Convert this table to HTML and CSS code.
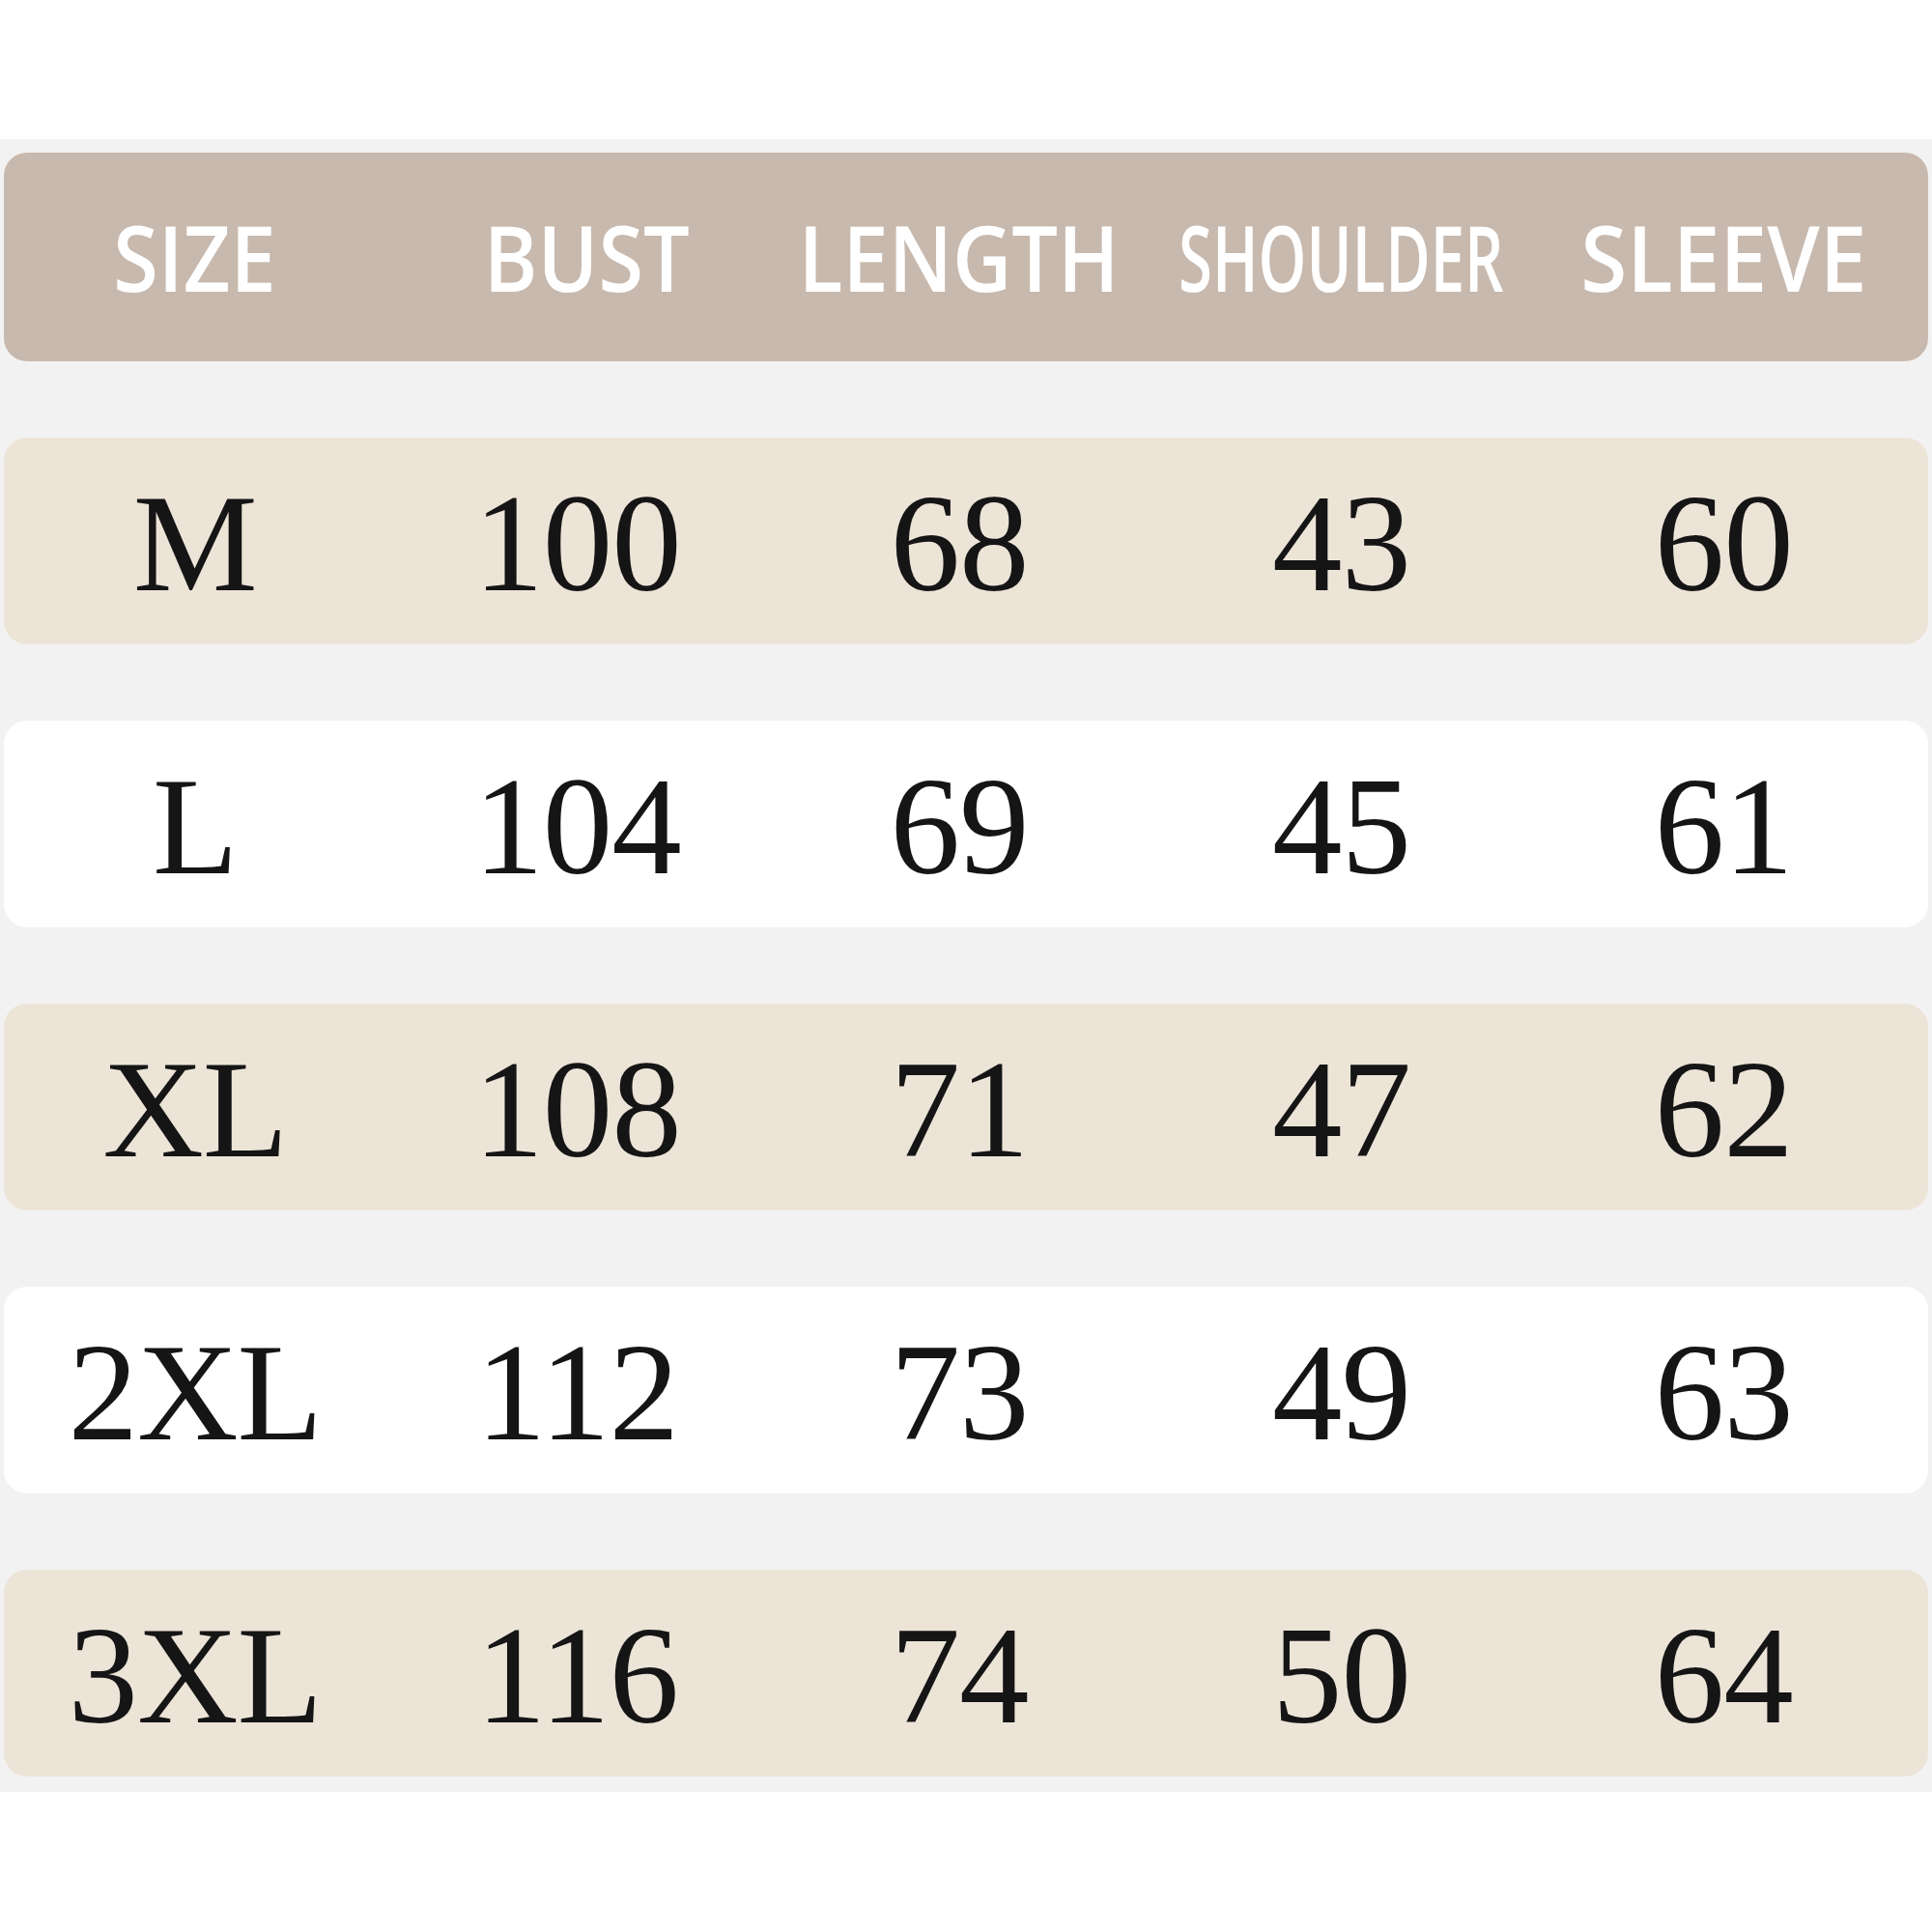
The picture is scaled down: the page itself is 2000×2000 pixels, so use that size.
FILE: index.html
```html
<!DOCTYPE html>
<html>
<head>
<meta charset="utf-8">
<link rel="stylesheet" href="styles.css">
</head>
<body>
<div class="top"></div>
<div class="chart">
  <div class="row head">
    <div class="cell"><span class="hw">SIZE</span></div>
    <div class="cell bust"><span class="hw">BUST</span></div>
    <div class="cell"><span class="hw">LENGTH</span></div>
    <div class="cell"><span class="hw narrow">SHOULDER</span></div>
    <div class="cell"><span class="hw wide">SLEEVE</span></div>
  </div>
  <div class="row beige">
    <div class="cell">M</div><div class="cell">100</div><div class="cell">68</div><div class="cell">43</div><div class="cell">60</div>
  </div>
  <div class="row white">
    <div class="cell">L</div><div class="cell">104</div><div class="cell">69</div><div class="cell">45</div><div class="cell">61</div>
  </div>
  <div class="row beige">
    <div class="cell">XL</div><div class="cell">108</div><div class="cell">71</div><div class="cell">47</div><div class="cell">62</div>
  </div>
  <div class="row white">
    <div class="cell">2XL</div><div class="cell">112</div><div class="cell">73</div><div class="cell">49</div><div class="cell">63</div>
  </div>
  <div class="row beige">
    <div class="cell">3XL</div><div class="cell">116</div><div class="cell">74</div><div class="cell">50</div><div class="cell">64</div>
  </div>
</div>
</body>
</html>
```

FILE: styles.css
```css
html, body {
  margin: 0;
  padding: 0;
  background: #ffffff;
}
.top {
  height: 144px;
}
.chart {
  background: #f2f2f2;
  padding: 14px 4px 16px 4px;
  display: flex;
  flex-direction: column;
  gap: 79px;
}
.row {
  display: grid;
  grid-template-columns: repeat(5, minmax(0, 1fr));
  padding-right: 14px;
  height: 214px;
  border-radius: 24px;
  align-items: center;
  font-family: "Liberation Serif", "Times New Roman", serif;
  font-size: 145px;
  letter-spacing: -1px;
  color: #151515;
}
.row.head {
  height: 216px;
  background: #c8b9ae;
  font-family: "Open Sans", "Liberation Sans", sans-serif;
  font-weight: 600;
  font-size: 94px;
  letter-spacing: 0;
  color: #ffffff;
}
.row.beige {
  background: #ede4d8;
}
.row.white {
  background: #ffffff;
}
.cell {
  display: flex;
  justify-content: center;
  line-height: 1;
  white-space: nowrap;
  padding-top: 4px;
}
.head .cell {
  padding-top: 0;
}
.head .cell.bust {
  padding-left: 20px;
}
.hw {
  display: inline-block;
  transform: scaleX(0.9);
}
.hw.narrow {
  transform: scaleX(0.675);
}
.hw.wide {
  transform: scaleX(0.93);
}
```
